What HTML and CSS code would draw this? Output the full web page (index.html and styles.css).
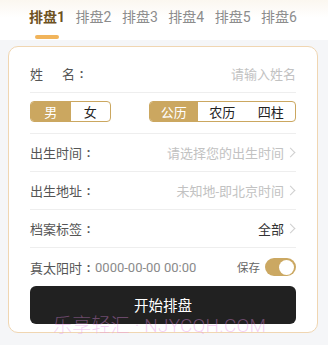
FILE: index.html
```html
<!DOCTYPE html>
<html lang="zh">
<head>
<meta charset="utf-8">
<link rel="stylesheet" href="styles.css">
</head>
<body>
<div class="page">
  <div class="tabs">
    <div class="tab active">排盘1<span class="bar"></span></div>
    <div class="tab">排盘2</div>
    <div class="tab">排盘3</div>
    <div class="tab">排盘4</div>
    <div class="tab">排盘5</div>
    <div class="tab">排盘6</div>
  </div>
  <div class="card">
    <div class="row first">
      <span class="label"><span class="gap">姓</span>名<span class="colon">:</span></span>
      <span class="ph">请输入姓名</span>
    </div>
    <div class="row seg-row">
      <div class="seg seg2">
        <span class="on">男</span><span>女</span>
      </div>
      <div class="seg seg3">
        <span class="on">公历</span><span>农历</span><span>四柱</span>
      </div>
    </div>
    <div class="row">
      <span class="label">出生时间<span class="colon">:</span></span>
      <span class="val ph">请选择您的出生时间<i class="chev"></i></span>
    </div>
    <div class="row">
      <span class="label">出生地址<span class="colon">:</span></span>
      <span class="val ph">未知地-即北京时间<i class="chev"></i></span>
    </div>
    <div class="row">
      <span class="label">档案标签<span class="colon">:</span></span>
      <span class="val dark">全部<i class="chev"></i></span>
    </div>
    <div class="row last">
      <span class="label">真太阳时<span class="colon">:</span><span class="time">0000-00-00 00:00</span></span>
      <span class="save">保存<span class="switch"><span class="knob"></span></span></span>
    </div>
    <div class="btn">开始排盘</div>
  </div>
  <div class="watermark">乐享轻汇 · NJYCQH.COM</div>
</div>
</body>
</html>
```

FILE: styles.css
```css
html, body {
  margin: 0;
  padding: 0;
}
body {
  width: 328px;
  height: 345px;
  overflow: hidden;
  background: #f5f6f8;
  font-family: "Roboto", "Noto Sans CJK SC", sans-serif;
}
.page {
  position: relative;
  height: 345px;
}
.tabs {
  height: 40px;
  background: linear-gradient(#fbf7f0, #ffffff 18px);
  display: flex;
  gap: 10.5px;
  padding-left: 29px;
  box-sizing: border-box;
}
.tab {
  position: relative;
  font-size: 14px;
  line-height: 34px;
  color: #8c8c8c;
  white-space: nowrap;
}
.tab.active {
  color: #6e521f;
  font-weight: bold;
}
.bar {
  position: absolute;
  left: 50%;
  margin-left: -12px;
  top: 35px;
  width: 24px;
  height: 3.5px;
  border-radius: 2px;
  background: #f1b45b;
}
.card {
  margin: 6px 10px 0 8px;
  background: #fff;
  border: 1px solid #f0d6b2;
  border-radius: 10px;
  padding: 0 21px 12px;
  height: 287px;
  box-sizing: border-box;
}
.row {
  height: 37px;
  border-bottom: 1px solid #eeeeee;
  display: flex;
  align-items: center;
  justify-content: space-between;
  font-size: 13px;
}
.row.first {
  padding-top: 7px;
  box-sizing: border-box;
  height: 46px;
}
.row.seg-row {
  height: 41px;
  padding-bottom: 3px;
  box-sizing: border-box;
}
.row.last {
  border-bottom: none;
  height: 38px;
}
.label {
  color: #555;
  display: flex;
  align-items: center;
}
.colon {
  display: inline-block;
  width: 13px;
  text-align: center;
  font-weight: bold;
}
.gap {
  margin-right: 19px;
}
.ph {
  color: #c2c2c2;
}
.val {
  display: flex;
  align-items: center;
}
.dark {
  color: #333;
}
.chev {
  display: inline-block;
  width: 6px;
  height: 6px;
  border-top: 1px solid #cfcfcf;
  border-right: 1px solid #cfcfcf;
  transform: rotate(45deg);
  margin-left: 3px;
  margin-right: 2px;
}
.time {
  color: #8a8a8a;
}
.seg {
  display: flex;
  height: 21px;
  border: 1px solid #cba760;
  border-radius: 4px;
  overflow: hidden;
  box-sizing: border-box;
}
.seg span {
  display: flex;
  align-items: center;
  justify-content: center;
  font-size: 13px;
  color: #222;
}
.seg2 span {
  width: 39.5px;
}
.seg3 span {
  width: 48.5px;
}
.seg span.on {
  background: #cba760;
  color: #fff;
}
.save {
  display: flex;
  align-items: center;
  gap: 5px;
  font-size: 11.5px;
  color: #666;
}
.switch {
  width: 31px;
  height: 18px;
  border-radius: 9px;
  background: #cba862;
  display: flex;
  align-items: center;
  justify-content: flex-end;
  padding-right: 2px;
  box-sizing: border-box;
}
.knob {
  width: 15px;
  height: 15px;
  border-radius: 50%;
  background: #fff;
}
.btn {
  height: 38px;
  background: #212121;
  border-radius: 6px;
  color: #fff;
  font-size: 14.5px;
  display: flex;
  align-items: center;
  justify-content: center;
  padding-bottom: 2px;
  box-sizing: border-box;
}
.watermark {
  position: absolute;
  left: 53px;
  top: 310px;
  font-size: 19px;
  font-weight: 300;
  font-family: "Roboto", "Noto Sans CJK SC", sans-serif;
  color: rgba(230, 140, 230, 0.4);
  white-space: nowrap;
  letter-spacing: 0.2px;
}
```
